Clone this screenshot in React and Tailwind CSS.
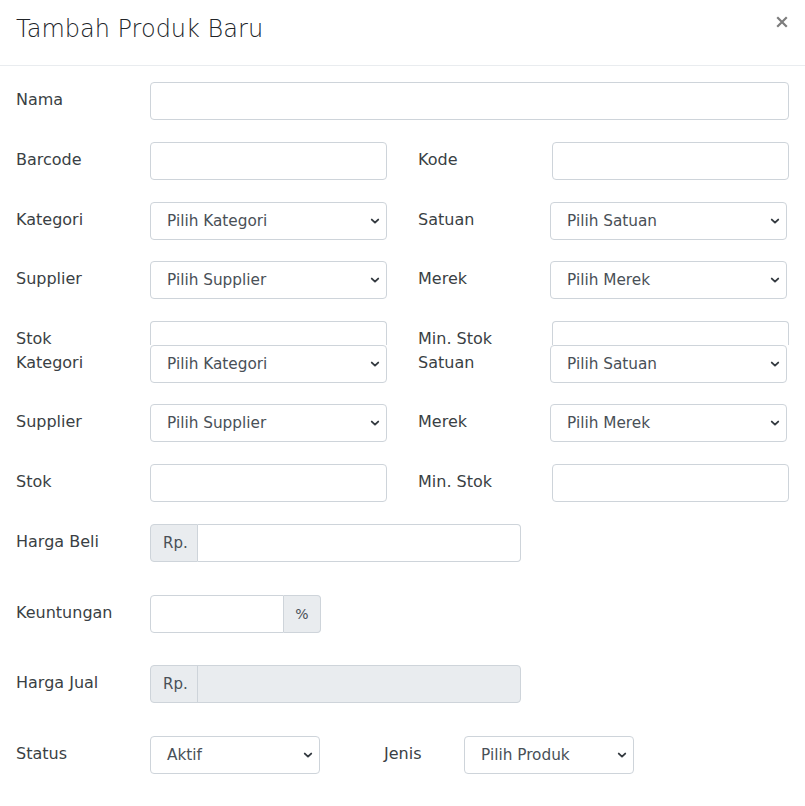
import React from "react";

const Chevron = () => (
  <svg className="pointer-events-none absolute right-[6px] top-1/2 -translate-y-1/2" width="10" height="10" viewBox="0 0 10 10">
    <path d="M1.8 3.6l3.2 3 3.2-3" fill="none" stroke="#343a40" strokeWidth="1.9" strokeLinecap="round" strokeLinejoin="round" />
  </svg>
);

function Select({ text, w = "w-[237px]" }) {
  return (
    <div className={`relative h-[38px] ${w} shrink-0 rounded-[4px] border border-[#ced4da] bg-white`}>
      <div className="pl-[16px] pt-[7px] text-[15.3px] leading-[22px] text-[#495057]">{text}</div>
      <Chevron />
    </div>
  );
}

function Input({ w = "w-[237px]" }) {
  return <div className={`h-[38px] ${w} shrink-0 rounded-[4px] border border-[#ced4da] bg-white`} />;
}

function CutInput() {
  return <div className="h-[24px] w-[237px] shrink-0 rounded-t-[4px] border border-b-0 border-[#ced4da] bg-white" />;
}

function Label({ children, w = "w-[134px]" }) {
  return <div className={`${w} shrink-0 pt-[7px] text-[16px] leading-[22px]`}>{children}</div>;
}

function PairRow({ l, lc, r, rc, rw = "w-[134px]", cls = "mb-[22px]" }) {
  return (
    <div className={`flex items-start ${cls}`}>
      <Label>{l}</Label>
      {lc}
      <div className="w-[31px] shrink-0" />
      <Label w={rw}>{r}</Label>
      {rc}
    </div>
  );
}

export default function App() {
  return (
    <div className="w-[805px] min-h-[806px] bg-white font-['DejaVu_Sans',sans-serif] text-[#3a3f44]">
      <div className="flex h-[66px] items-start justify-between border-b border-[#e9ecef] px-4 pt-[11px]">
        <h5 className="text-[24px] font-extralight leading-[36px] text-[#212529]">Tambah Produk Baru</h5>
        <button className="mr-[1px] mt-[5px]">
          <svg width="12" height="12" viewBox="0 0 12 12">
            <path d="M2 2l8 8M10 2l-8 8" stroke="#7d7d7d" strokeWidth="2.2" strokeLinecap="square" />
          </svg>
        </button>
      </div>

      <div className="px-4 pt-4">
        <div className="mb-[22px] flex items-start">
          <Label>Nama</Label>
          <Input w="w-[639px]" />
        </div>

        <PairRow l="Barcode" lc={<Input />} r="Kode" rc={<Input />} />
        <PairRow l="Kategori" lc={<Select text="Pilih Kategori" />} r="Satuan" rw="w-[132px]" rc={<Select text="Pilih Satuan" />} cls="mb-[21px]" />
        <PairRow l="Supplier" lc={<Select text="Pilih Supplier" />} r="Merek" rw="w-[132px]" rc={<Select text="Pilih Merek" />} />
        <PairRow l="Stok" lc={<CutInput />} r="Min. Stok" rc={<CutInput />} cls="h-[24px]" />

        <PairRow l="Kategori" lc={<Select text="Pilih Kategori" />} r="Satuan" rw="w-[132px]" rc={<Select text="Pilih Satuan" />} cls="mb-[21px]" />
        <PairRow l="Supplier" lc={<Select text="Pilih Supplier" />} r="Merek" rw="w-[132px]" rc={<Select text="Pilih Merek" />} />
        <PairRow l="Stok" lc={<Input />} r="Min. Stok" rc={<Input />} />

        <div className="mb-[33px] flex items-start">
          <Label>Harga Beli</Label>
          <div className="flex h-[38px] w-[371px]">
            <div className="w-[48px] rounded-l-[4px] border border-[#ced4da] bg-[#e9ecef] pl-[12px] pt-[7px] text-[15px] leading-[22px] text-[#495057]">Rp.</div>
            <div className="flex-1 rounded-r-[4px] border border-l-0 border-[#ced4da] bg-white" />
          </div>
        </div>

        <div className="mb-[32px] flex items-start">
          <Label>Keuntungan</Label>
          <div className="flex h-[38px] w-[171px]">
            <div className="w-[134px] rounded-l-[4px] border border-[#ced4da] bg-white" />
            <div className="flex w-[37px] items-center justify-center rounded-r-[4px] border border-l-0 border-[#ced4da] bg-[#e9ecef] text-[14px] text-[#495057]">%</div>
          </div>
        </div>

        <div className="mb-[33px] flex items-start">
          <Label>Harga Jual</Label>
          <div className="flex h-[38px] w-[371px] rounded-[4px] border border-[#ced4da] bg-[#e9ecef]">
            <div className="w-[47px] border-r border-[#ced4da] pl-[12px] pt-[7px] text-[15px] leading-[22px] text-[#495057]">Rp.</div>
            <div className="flex-1" />
          </div>
        </div>

        <div className="flex items-start">
          <Label>Status</Label>
          <Select text="Aktif" w="w-[170px]" />
          <div className="w-[64px] shrink-0" />
          <Label w="w-[80px]">Jenis</Label>
          <Select text="Pilih Produk" w="w-[170px]" />
        </div>
      </div>
    </div>
  );
}
